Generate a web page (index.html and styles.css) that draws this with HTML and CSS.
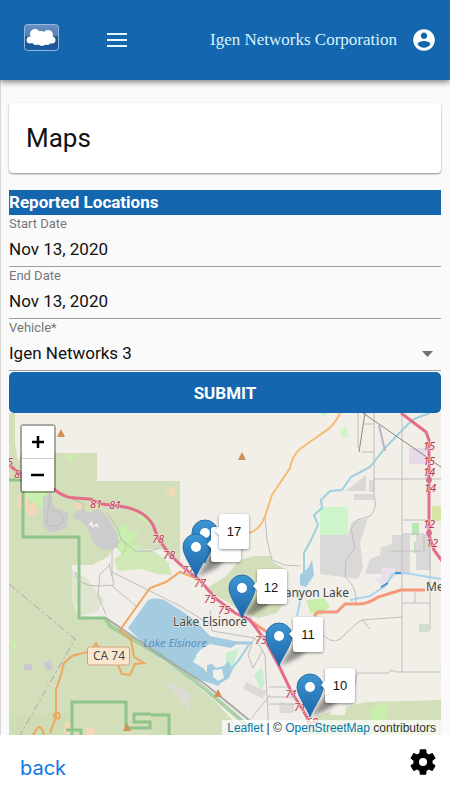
FILE: index.html
```html
<!DOCTYPE html>
<html lang="en">
<head>
<meta charset="utf-8">
<meta name="viewport" content="width=device-width, initial-scale=1">
<title>Maps</title>
<link rel="stylesheet" href="styles.css">
</head>
<body>
<header class="topbar">
  <a class="logo" href="#" aria-label="Home">
    <svg width="36" height="28" viewBox="0 0 36 28">
      <defs><linearGradient id="logoBg" x1="0" y1="0" x2="0" y2="1"><stop offset="0" stop-color="#6c8fc0"/><stop offset=".42" stop-color="#5580b8"/><stop offset=".5" stop-color="#174d8e"/><stop offset="1" stop-color="#1c5ca3"/></linearGradient></defs>
      <rect x=".5" y=".5" width="34" height="26" rx="3" fill="url(#logoBg)" stroke="#8fb9e2"/>
      <g fill="#fff"><circle cx="11" cy="10" r="5"/><circle cx="17" cy="12" r="5"/><circle cx="24" cy="11" r="5"/><circle cx="6" cy="16" r="3.500"/><circle cx="12" cy="17" r="4"/><circle cx="18" cy="17" r="5"/><circle cx="23" cy="17" r="4"/><circle cx="28" cy="16" r="3.500"/></g>
    </svg>
  </a>
  <button class="icon-button" aria-label="Menu">
    <svg width="20" height="14" viewBox="0 0 20 14"><path d="M0 1h20M0 7h20M0 13h20" stroke="#e6f6ff" stroke-width="2"/></svg>
  </button>
  <span class="company">Igen Networks Corporation</span>
  <button class="icon-button" aria-label="Account">
    <svg width="26" height="26" viewBox="0 0 24 24"><path fill="#fff" d="M12 2C6.480 2 2 6.480 2 12s4.480 10 10 10 10-4.480 10-10S17.520 2 12 2zm0 3c1.660 0 3 1.340 3 3s-1.340 3-3 3-3-1.340-3-3 1.340-3 3-3zm0 14.200c-2.500 0-4.710-1.280-6-3.220.030-1.990 4-3.080 6-3.080 1.990 0 5.970 1.090 6 3.080-1.290 1.940-3.500 3.220-6 3.220z"/></svg>
  </button>
</header>

<main class="content">
  <section class="card"><h1>Maps</h1></section>
  <form class="report">
    <h2>Reported Locations</h2>
    <div class="field"><label for="start">Start Date</label><input id="start" type="text" value="Nov 13, 2020"></div>
    <div class="field"><label for="end">End Date</label><input id="end" type="text" value="Nov 13, 2020"></div>
    <div class="field"><label for="vehicle">Vehicle*</label>
      <select id="vehicle"><option>Igen Networks 3</option></select>
      <svg class="caret" width="11" height="6" viewBox="0 0 11 6"><path d="M0 0h11L5.500 6z" fill="#707070"/></svg>
    </div>
    <button class="submit" type="button">SUBMIT</button>
  </form>

  <section class="map" aria-label="Map">
    <svg class="tiles" viewBox="9 413 432 322" preserveAspectRatio="xMidYMin slice">
      <defs>
        <linearGradient id="pinFill" x1="0" y1="0" x2="0" y2="1"><stop offset="0" stop-color="#3d96d2"/><stop offset="1" stop-color="#1d65aa"/></linearGradient>
        <filter id="soft" x="-50%" y="-50%" width="200%" height="200%"><feGaussianBlur stdDeviation="2"/></filter>
        <filter id="drop" x="-30%" y="-30%" width="160%" height="160%"><feDropShadow dx="0" dy="1" stdDeviation="1.500" flood-opacity=".45"/></filter>
        <g id="pin">
          <path d="M1 0 14-20Q25-29 28-20 28-12 14-6z" fill="#000" opacity=".4" filter="url(#soft)"/>
          <path d="M0 0C-3-9-13-21-13-30a13 13 0 0 1 26 0C13-21 3-9 0 0z" fill="url(#pinFill)" stroke="#2470ad"/>
          <circle cy="-30" r="5" fill="#fff"/>
        </g>
        <path id="tip" d="M-4 17 0 13V3q0-3 3-3h24q3 0 3 3v29q0 3-3 3H3q-3 0-3-3V21z" fill="#fff" filter="url(#drop)"/>
        <path id="peak" d="M-4 4 0-4 4 4z" fill="#d08f55"/>
      </defs>
      <rect x="9" y="413" width="432" height="322" fill="#f2efe9"/>

      <!-- forest and open land -->
      <g fill="#d3dfba">
        <path d="M9 480 22 453H97V481H180V568L170 572H79V618H105L146 648 205 690 246 735H9z"/>
        <path d="M9 413h6v30l6 38H9z"/>
        <path d="M204 590 226 576 240 560 253 556H270L273 562 287 570V598L277 613 258 618 242 612 224 600z"/>
        <path d="M300 735 318 716 341 708 366 702 441 700V735z"/>
      </g>
      <path d="M72 565H92L108 557 118 540 132 550 160 549 168 553 180 566 205 590 230 612 262 640 300 708 305 735H248L228 712 190 680 146 648 106 618H79L72 600z" fill="#f1eeea"/>
      <path d="M114 560 124 551 152 550 168 562 172 575 158 574 140 569 118 571z" fill="#cfe8b6"/>
      <path d="M72 570 86 578 104 600 97 612 80 616 72 600z" fill="#dfe5cf"/>
      <g fill="#c9efad">
        <path d="M22 481 35 484 55 500 48 512 30 500 22 500zM112 530l16-5-2 9 14-4-9 14 10 2-16 12-10-12zM136 514l14 3 4 8-12-3zM64 456l13-2-6 7zM9 640l8 4-3 7zM370 710l16-9 2 12-6 12-10-4zM306 600l18-2 6 8-8 9-12-2z"/>
        <path d="M226 653l13-5-6 18-7-2zM254 675l8-8 3 16-4 8z" fill="#c8f0d0"/>
      </g>
      <g fill="#cdf5c9"><path d="M320 507h28v28h-28zM340 430l6-3 3 9-7 2zM320 413h7l-3 5z"/></g>
      <g fill="#b9e6b3"><path d="M412 523h7v12h-7zM414 542h6v11h-6zM398 540h10v20h-10zM344 548h4v7h-4z"/></g>
      <path d="M432 506h9v15h-9z" fill="#d5e7a3"/>
      <path d="M409 448h17v16h-17z" fill="#e8d9e8"/>

      <!-- built-up land -->
      <g fill="#cccbcd">
        <path d="M73 518 76 511 84 510 88 513 99 509 107 517 113 527 118 534V547L104 550 94 544 90 533 83 522z"/>
        <path d="M43 497 51 493 54 507 68 513 67 528 50 533 43 526z"/>
      </g>
      <path d="M320 535h28l4-13 16-4-8 25 3 24-5 12-38-5zM392 535h18v39H365l5-15 10-4 1-8 11-3zM354 494h20v6h-20zM346 491l20-16v16h-20zM369 480h6v12h-6zM416 535h15v35h-15z" fill="#dad9d8"/>
      <path d="M9 714h62v21H9zM153 712h18v23h-18z" fill="#ceddb4"/>
      <path d="M165 680l24 12 0 20zM246 682l21 9-4 8-20-10zM279 702l15 2v9h-14z" fill="#dedbd6"/>
      <path d="M17 494l10 2 2 10-12 2zM25 506l11-4 1 12-9 2zM75 503h8v6h-8zM65 722h8v12h-10zM86 728h9v7h-9zM168 487h9l-4 10-7-3z" fill="#f2d8b9"/>
      <path d="M88 525l4-4 1 5 4-3 2 5-4-2-2 2-3-3z" fill="#f4f0f0"/>
      <path d="M43 663l8-3 2 9-6 2zM24 664h8v6h-8z" fill="#ccc8cf"/>
      <path d="M419 624h10v8h-10z" fill="#d5ddd3"/>
      <path d="M381 568h14v10l-14 6zM374 578h8v8z" fill="#e9deeb"/>
      <path d="M330 705h17l-2 10h-14z" fill="#f2efe9"/>

      <!-- water -->
      <path d="M128 628 148 600Q160 596 169 603L194 619 210 636 239 642 231 648 210 644 200 650 193 662 203 668 212 678 220 682 219 686 200 680 155 655z" fill="#a4cce0"/>
      <path d="M226 643 252 643" stroke="#a4cce0" stroke-width="3"/>
      <path d="M196 655l5-5 4 1-2 8-7 3z" fill="#eff1eb"/>
      <path d="M207 665l5-1 4 4 8-2 4-5 5 8-4 9-10 6-12-4z" fill="#a4cce0"/>
      <path d="M213 670l9-1 2 9-6 3-5-4z" fill="#eff1eb"/>
      <path d="M300 575l8-7 4-8 2 15-8 12-6-2z" fill="#a4cce0"/>
      <g fill="none" stroke="#9ed0de" stroke-width="2">
        <path d="M430 413 419 417 412 420 385 448 370 467 351 477 342 490 330 491 321 500 322 508 314 515 318 525 311 540 304 553 304 572"/>
        <path d="M296 590 300 602 297 616M350 600 370 596 385 586 393 574 405 573 441 579" stroke="#a7d4ed"/>
        <path d="M250 643 239 660 230 670"/>
      </g>
      <path d="M381 587l7-4M395 573l6 0" stroke="#4392d5" stroke-width="2"/>

      <!-- protected area edges -->
      <g fill="none" stroke="#8fc48b" stroke-width="3">
        <path d="M9 480H23V537H79V618H106"/>
        <path d="M72 735V702H126V728H150V722H134V714H151M66 730h15v5M151 715h18v20"/>
        <path d="M105 618 110 626 160 655 205 689 249 727" stroke-width="4" opacity=".7"/>
      </g>
      <path d="M9 584 75 639 20 735" fill="none" stroke="#b6a0ad" stroke-dasharray="8 3 2 3"/>

      <!-- minor roads -->
      <g fill="none" stroke="#bebebc" stroke-width="1">
        <path d="M374 413V495Q378 509 370 516L357 520 351 529 355 548 346 560 345 577Q357 586 356 603M402 438V672M402 413V438M374 479H441M362 452H374M358 413V448M363 424h11M402 520h28M402 603h28M430 540v91M415 592v11M402 534h22v18M391 551h30"/>
        <path d="M323 635Q336 648 346 633L356 624 362 620 402 617M362 620l8 9M352 702 357 673H388L391 670 396 672H441"/>
        <path d="M265 516 267 540 272 560 285 565 300 566"/>
        <path d="M56 491 83 504V511M50 493 47 523Q52 530 62 523 66 512 51 510M107 513 118 529 121 539 112 550V576M121 539 135 551H150L160 548M121 539q10 10 1 14M110 565 100 574 98 595 106 615M75 572q3 14 22 14l17-1-5-22M112 586l24 20"/>
        <path d="M112 572 180 606 211 625M210 610 212 631 255 638 265 655 269 735M249 620 257 610 276 600M254 638 248 655 253 668 263 650M250 720 270 695M269 687h20M269 697h25M269 704h30"/>
        <path d="M106 618 160 655 205 684 249 720" stroke="#aaa" stroke-width="2"/>
      </g>
      <path d="M363 413 441 467M365 413 359 452" fill="none" stroke="#8c8682"/>
      <path d="M379 425 385 451" stroke="#b7b3cb" stroke-width="2"/>

      <!-- main roads -->
      <g fill="none" stroke="#f6bc72" stroke-width="2">
        <path d="M340 413Q334 427 321 434L300 449Q292 456 290 468L272 495 265 516Q260 530 249 533"/>
        <path d="M33 735 38 727Q42 726 44 735M50 733 56 717V690L61 675 64 663 72 656 91 651 96 643 100 650M56 713q-5 2 0 5t3-5zM118 665 122 674 130 675 135 664 144 663 134 657 131 640 120 630 150 588 166 582 180 572 200 580" stroke="#f0a65d"/>
      </g>
      <path d="M314 616 318 612H337L345 604H360Q370 603 378 597L401 590H425M249 620 267 632" fill="none" stroke="#f7977d" stroke-width="3"/>
      <path d="M9 465 22 475 38 480 55 490Q65 498 75 498L90 499 102 504 125 507Q145 511 153 525L158 538 170 555 190 573 200 580 215 598 235 613 250 620 265 640 280 668 292 693 300 705 313 728" fill="none" stroke="#e46e89" stroke-width="3"/>
      <path d="M401 413 426 432 429 440V535L434 550 442 561" fill="none" stroke="#e46e89" stroke-width="3"/>
      <circle cx="429" cy="480" r="3" fill="#d77290"/><circle cx="429" cy="533" r="3" fill="#d77290"/>

      <g class="shield">
        <text x="10" y="466">5</text><text x="20" y="478">85</text><text x="96" y="508">81</text><text x="115" y="509">81</text>
        <text x="158" y="543">78</text><text x="169" y="559">78</text><text x="188" y="574">77</text><text x="200" y="587">77</text>
        <text x="210" y="603">75</text><text x="224" y="614">75</text><text x="261" y="644">73</text><text x="291" y="698">71</text><text x="300" y="711">71</text><text x="312" y="726">69</text>
        <text x="429" y="450">15</text><text x="429" y="465">15</text><text x="429" y="476">14</text><text x="430" y="492">14</text><text x="429" y="528">12</text><text x="432" y="547">12</text>
      </g>
      <use href="#peak" x="61" y="433"/><use href="#peak" x="242" y="456"/><use href="#peak" x="218" y="693"/><use href="#peak" x="127" y="727"/>
      <rect x="87.500" y="647" width="42" height="18" rx="2" fill="#fbe5cb" stroke="#d0a184"/>
      <text class="place" x="109" y="660">CA 74</text>
      <text class="place" x="210" y="626">Lake Elsinore</text>
      <text class="place" x="313" y="597">Canyon Lake</text>
      <text class="place start" x="426" y="591">Me</text>
      <text class="lake" x="175" y="647">Lake Elsinore</text>

      <use href="#pin" x="205" y="563"/><use href="#pin" x="196" y="577"/><use href="#pin" x="242" y="618"/><use href="#pin" x="279" y="666"/><use href="#pin" x="310" y="717"/>
      <use href="#tip" x="211" y="527"/><use href="#tip" x="219" y="514"/><use href="#tip" x="257" y="569"/><use href="#tip" x="293" y="617"/><use href="#tip" x="325" y="668"/>
      <g class="count"><text x="234" y="536">17</text><text x="271" y="592">12</text><text x="308" y="639">11</text><text x="340" y="690">10</text></g>
    </svg>
    <div class="zoom">
      <button type="button" aria-label="Zoom in"><svg width="14" height="14" viewBox="0 0 14 14"><path d="M7 1v12M1 7h12" stroke="#000" stroke-width="2.500"/></svg></button>
      <button type="button" aria-label="Zoom out"><svg width="14" height="14" viewBox="0 0 14 14"><path d="M0 7h13" stroke="#000" stroke-width="2.500"/></svg></button>
    </div>
    <div class="attribution"><a href="#">Leaflet</a> | © <a href="#">OpenStreetMap</a> contributors</div>
  </section>
</main>

<footer class="bottombar">
  <a class="back" href="#">back</a>
  <button class="icon-button" aria-label="Settings">
    <svg width="32" height="32" viewBox="0 0 24 24"><path d="M19.140 12.940c.040-.300.060-.610.060-.940 0-.320-.020-.640-.070-.940l2.030-1.580c.180-.140.230-.410.120-.610l-1.920-3.320c-.120-.220-.370-.290-.590-.220l-2.390.960c-.500-.380-1.030-.700-1.620-.940l-.360-2.540c-.040-.240-.240-.410-.480-.410h-3.840c-.240 0-.430.170-.470.410l-.360 2.540c-.590.240-1.130.570-1.620.940l-2.390-.960c-.220-.080-.470 0-.590.220L2.740 8.870c-.120.210-.080.470.120.610l2.030 1.580c-.050.300-.090.630-.090.940s.020.640.070.940l-2.030 1.580c-.180.140-.230.410-.120.610l1.920 3.320c.120.220.370.290.590.220l2.390-.960c.500.380 1.030.700 1.620.940l.360 2.540c.050.240.240.410.480.410h3.840c.240 0 .440-.170.470-.410l.360-2.540c.590-.240 1.130-.560 1.620-.940l2.390.960c.220.080.470 0 .590-.220l1.920-3.320c.120-.220.070-.470-.120-.610l-2.010-1.580zM12 15a3 3 0 1 1 0-6 3 3 0 0 1 0 6z"/></svg>
  </button>
</footer>
</body>
</html>
```

FILE: styles.css
```css
* {
  box-sizing: border-box;
}

body {
  margin: 0;
  min-height: 100vh;
  display: flex;
  flex-direction: column;
  background: #fafafa;
  color: #111;
  font-family: Roboto, sans-serif;
}

h1,
h2 {
  margin: 0;
}

button {
  border: 0;
  padding: 0;
  font: inherit;
  cursor: pointer;
}

svg {
  display: block;
}

.topbar {
  position: relative;
  display: flex;
  align-items: center;
  height: 80px;
  padding: 0 13px 0 24px;
  background: #1467ae;
  box-shadow: 0 2px 6px rgba(0, 0, 0, 0.5);
}

.logo {
  margin: 0 47px 4px 0;
}

.icon-button {
  background: none;
}

.company {
  margin-left: auto;
  margin-right: 14px;
  color: #d9f3ff;
  font: 17px/24px "Liberation Serif", serif;
}

.content {
  flex: 1;
  display: flex;
  flex-direction: column;
  padding: 23px 9px 0 8px;
  border-left: 1px solid #d8d8d8;
}

.card {
  padding: 19px 17px;
  margin-bottom: 17px;
  border-radius: 4px;
  background: #fff;
  box-shadow: 0 1px 2px rgba(0, 0, 0, 0.45);
}

.card h1 {
  font-size: 26px;
  font-weight: 400;
  line-height: 32px;
}

.report h2 {
  background: #1467ae;
  color: #fff;
  font-size: 17px;
  line-height: 25px;
}

.field {
  position: relative;
  display: flex;
  flex-direction: column;
  border-bottom: 1px solid #a0a0a0;
}

.field label {
  color: #777;
  font-size: 13px;
  line-height: 17px;
}

.field input,
.field select {
  width: 100%;
  height: 34px;
  padding: 0;
  border: 0;
  background: none;
  color: #111;
  font: 17px Roboto, sans-serif;
  appearance: none;
}

.caret {
  position: absolute;
  right: 8px;
  bottom: 13px;
  pointer-events: none;
}

.submit {
  display: block;
  width: 100%;
  height: 41px;
  margin-top: 1px;
  border-radius: 5px;
  background: #1467ae;
  color: #fff;
  font-size: 17px;
  font-weight: 700;
}

.map {
  position: relative;
  flex: 1;
  min-height: 320px;
  overflow: hidden;
}

.tiles {
  position: absolute;
  inset: 0;
  width: 100%;
  height: 100%;
}

.tiles text {
  text-anchor: middle;
}

.shield {
  fill: #b33a50;
  stroke: #f6e6e2;
  stroke-width: 1px;
  paint-order: stroke;
  font: italic 11px "Noto Sans", sans-serif;
}

.place {
  fill: #444;
  stroke: #f5f1eb;
  stroke-width: 1px;
  paint-order: stroke;
  font: 12px "Noto Sans", sans-serif;
}

.tiles .start {
  text-anchor: start;
}

.lake {
  fill: #5b8fc6;
  font: italic 11px "Noto Sans", sans-serif;
}

.count {
  fill: #111;
  font: 13px "Liberation Sans", sans-serif;
}

.zoom {
  position: absolute;
  top: 11px;
  left: 11px;
  border: 2px solid rgba(0, 0, 0, 0.3);
  border-radius: 4px;
  background-clip: padding-box;
}

.zoom button {
  display: flex;
  align-items: center;
  justify-content: center;
  width: 32px;
  height: 32px;
  background: #fff;
}

.zoom button:first-child {
  height: 33px;
  border-bottom: 1px solid #ccc;
}

.attribution {
  position: absolute;
  right: 0;
  bottom: 0;
  padding: 2px 5px 0;
  background: rgba(255, 255, 255, 0.7);
  color: #333;
  font: 12px/13px "Liberation Sans", sans-serif;
}

.attribution a {
  color: #0078a8;
  text-decoration: none;
}

.bottombar {
  display: flex;
  align-items: center;
  justify-content: space-between;
  height: 65px;
  padding: 0 11px 0 20px;
  background: #fff;
}

.back {
  color: #0f74e6;
  font: 20px/24px Inter, sans-serif;
  text-decoration: none;
}

.bottombar .icon-button {
  margin-bottom: 11px;
}
```
